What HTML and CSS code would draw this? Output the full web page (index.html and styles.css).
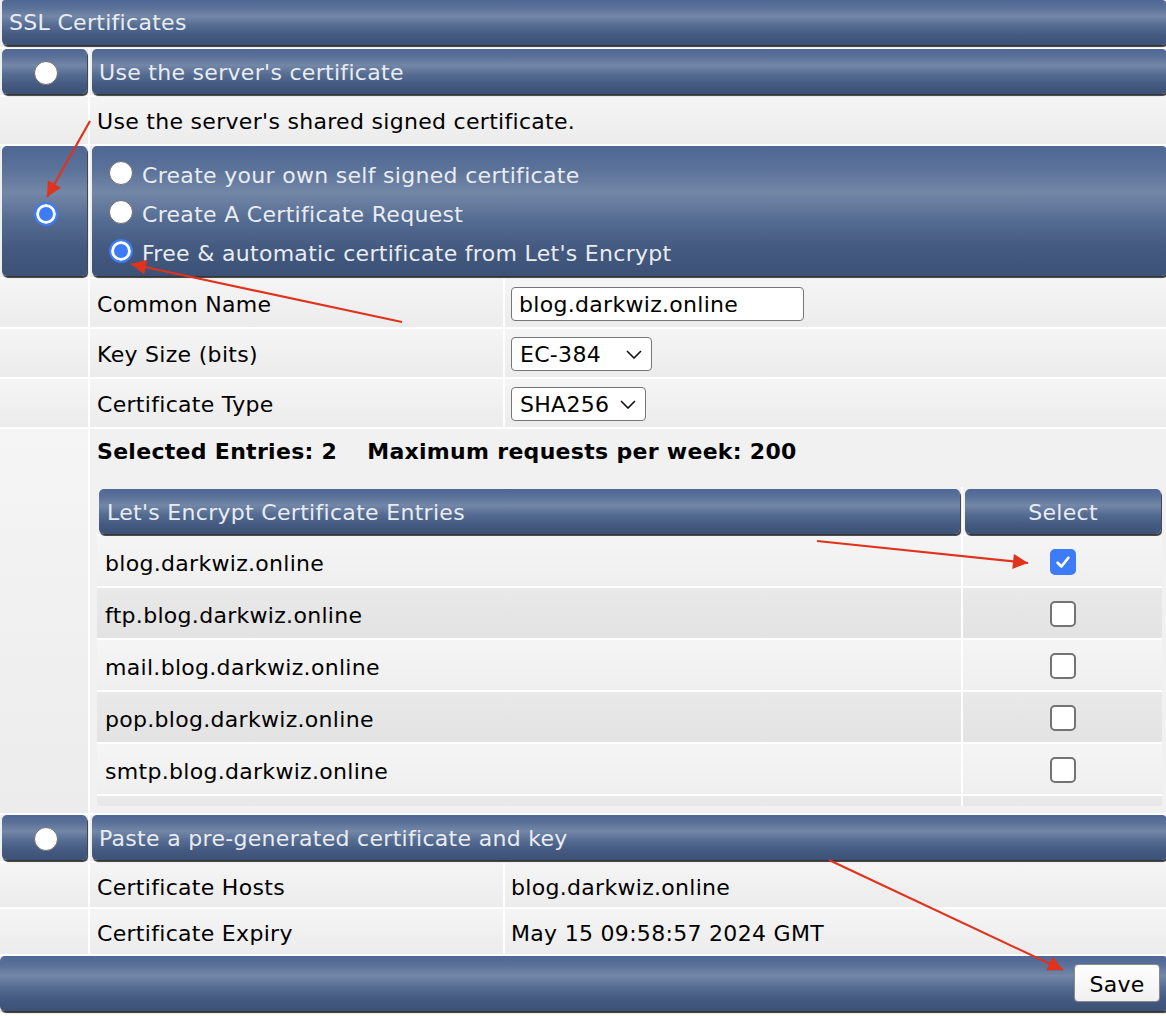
FILE: index.html
```html
<!DOCTYPE html>
<html>
<head>
<meta charset="utf-8">
<title>SSL Certificates</title>
<link rel="stylesheet" href="styles.css">
</head>
<body>
<div class="page">
  <div class="row">
    <div class="dcell span-all title-cell"><div class="bar title-bar">SSL Certificates</div></div>
  </div>

  <div class="row r46">
    <div class="dcell"><div class="bar ctl"><span class="radio"></span></div></div>
    <div class="dcell span-2"><div class="bar text-bar">Use the server's certificate</div></div>
  </div>

  <div class="row h47">
    <div class="lcell"></div>
    <div class="lcell span-2 label">Use the server's shared signed certificate.</div>
  </div>

  <div class="row r130">
    <div class="dcell"><div class="bar ctl"><span class="radio checked"></span></div></div>
    <div class="dcell span-2">
      <div class="bar options">
        <div class="opt"><span class="radio"></span><span>Create your own self signed certificate</span></div>
        <div class="opt"><span class="radio"></span><span>Create A Certificate Request</span></div>
        <div class="opt"><span class="radio checked"></span><span>Free &amp; automatic certificate from Let's Encrypt</span></div>
      </div>
    </div>
  </div>

  <div class="row h48">
    <div class="lcell"></div>
    <div class="lcell label">Common Name</div>
    <div class="lcell value"><div class="input">blog.darkwiz.online</div></div>
  </div>
  <div class="row h48">
    <div class="lcell"></div>
    <div class="lcell label">Key Size (bits)</div>
    <div class="lcell value"><div class="select w141">EC-384<svg class="chev" viewBox="0 0 16 9" width="16" height="9"><path d="M1 1 L8 8 L15 1" fill="none" stroke="#111" stroke-width="1.6"/></svg></div></div>
  </div>
  <div class="row h48">
    <div class="lcell"></div>
    <div class="lcell label">Certificate Type</div>
    <div class="lcell value"><div class="select w135">SHA256<svg class="chev" viewBox="0 0 16 9" width="16" height="9"><path d="M1 1 L8 8 L15 1" fill="none" stroke="#111" stroke-width="1.6"/></svg></div></div>
  </div>

  <div class="row entries-row">
    <div class="lcell"></div>
    <div class="lcell span-2 entries">
      <div class="summary"><span>Selected Entries: 2</span><span class="max">Maximum requests per week: 200</span></div>
      <div class="scroller">
        <div class="etable">
          <div class="ehead"><div class="bar hbar">Let's Encrypt Certificate Entries</div></div>
          <div class="ehead"><div class="bar hbar center">Select</div></div>

          <div class="ecell odd">blog.darkwiz.online</div>
          <div class="ecell odd chk"><span class="checkbox checked"><svg viewBox="0 0 16 16" width="18" height="18"><path d="M3.2 8.6 L6.6 12 L12.8 4.2" fill="none" stroke="#fff" stroke-width="2.4" stroke-linecap="round" stroke-linejoin="round"/></svg></span></div>

          <div class="ecell even">ftp.blog.darkwiz.online</div>
          <div class="ecell even chk"><span class="checkbox"></span></div>

          <div class="ecell odd">mail.blog.darkwiz.online</div>
          <div class="ecell odd chk"><span class="checkbox"></span></div>

          <div class="ecell even">pop.blog.darkwiz.online</div>
          <div class="ecell even chk"><span class="checkbox"></span></div>

          <div class="ecell odd">smtp.blog.darkwiz.online</div>
          <div class="ecell odd chk"><span class="checkbox"></span></div>

          <div class="ecell even"></div>
          <div class="ecell even chk"></div>
        </div>
      </div>
    </div>
  </div>

  <div class="row r46">
    <div class="dcell"><div class="bar ctl"><span class="radio"></span></div></div>
    <div class="dcell span-2"><div class="bar text-bar">Paste a pre-generated certificate and key</div></div>
  </div>

  <div class="row h44">
    <div class="lcell"></div>
    <div class="lcell label">Certificate Hosts</div>
    <div class="lcell value">blog.darkwiz.online</div>
  </div>
  <div class="row h45">
    <div class="lcell"></div>
    <div class="lcell label">Certificate Expiry</div>
    <div class="lcell value">May 15 09:58:57 2024 GMT</div>
  </div>

  <div class="row">
    <div class="span-all footer-cell"><div class="bar footer-bar"><button class="save">Save</button></div></div>
  </div>

  <svg class="arrows" width="1166" height="1016" viewBox="0 0 1166 1016">
    <defs>
      <marker id="ah" viewBox="0 0 10 10" refX="10" refY="5" markerUnits="userSpaceOnUse" markerWidth="18" markerHeight="15" orient="auto">
        <path d="M0 0 L10 5 L0 10 Z" fill="#e0321c"/>
      </marker>
    </defs>
    <line x1="90" y1="121" x2="47" y2="197" stroke="#e0321c" stroke-width="2.2" marker-end="url(#ah)"/>
    <line x1="402" y1="322" x2="131" y2="264" stroke="#e0321c" stroke-width="2.2" marker-end="url(#ah)"/>
    <line x1="817" y1="541" x2="1028" y2="563" stroke="#e0321c" stroke-width="2.2" marker-end="url(#ah)"/>
    <line x1="829" y1="860" x2="1063" y2="970" stroke="#e0321c" stroke-width="2.2" marker-end="url(#ah)"/>
  </svg>
</div>
</body>
</html>
```
FILE: styles.css
```css
html, body {
  margin: 0;
  padding: 0;
  overflow: hidden;
  background: #ffffff;
}
body {
  font-family: "DejaVu Sans", Verdana, sans-serif;
  font-size: 22px;
  letter-spacing: 0.3px;
  color: #000;
}
.page {
  position: relative;
  width: 1168px;
  height: 1016px;
  background: #ffffff;
}
.row {
  display: grid;
  grid-template-columns: 88px 413px 1fr;
  column-gap: 2px;
  margin-bottom: 2px;
}
.span-all { grid-column: 1 / 4; }
.span-2 { grid-column: 2 / 4; }

.bar {
  background: linear-gradient(to bottom, #4e6794 0%, #5b7299 18%, #7387a7 36%, #566d93 56%, #445a80 78%, #3c5176 100%);
  border-radius: 5px;
  box-shadow: 1px 2px 1px rgba(0, 0, 0, 0.78);
  color: #e9ecf1;
  box-sizing: border-box;
}
.dcell {
  background: #efefef;
  padding: 0 1px 0 2px;
}
.title-cell { height: 47px; padding-left: 2px; background: #efefef; }
.title-bar {
  height: 45px;
  display: flex;
  align-items: center;
  padding-left: 7px;
  border-top-left-radius: 3px;
}
.r46 .dcell { height: 46px; }
.r46 .bar { height: 45px; }
.text-bar {
  display: flex;
  align-items: center;
  padding-left: 7px;
  padding-top: 1px;
}
.ctl {
  display: flex;
  align-items: center;
  justify-content: center;
  padding-left: 2px;
  padding-top: 2px;
}
.r130 .dcell { height: 131px; }
.r130 .bar { height: 130px; }
.r130 .ctl { padding-top: 6px; }
.options {
  display: flex;
  flex-direction: column;
  justify-content: center;
  gap: 15px;
  padding-left: 17px;
  padding-top: 7px;
}
.opt {
  display: flex;
  align-items: center;
  gap: 9px;
  height: 24px;
}
.opt .radio { position: relative; top: -3px; }

.radio {
  display: inline-block;
  width: 24px;
  height: 24px;
  box-sizing: border-box;
  border-radius: 50%;
  background: #ffffff;
  border: 1px solid #6e6e6e;
  flex: none;
}
.radio.checked {
  background: #3e7bf6;
  border: 2px solid #3e7bf6;
  box-shadow: inset 0 0 0 3px #ffffff;
}

.lcell {
  background: linear-gradient(to bottom, #f5f5f5, #ececec);
}
.h47 .lcell { height: 47px; }
.h48 .lcell { height: 48px; }
.h44 .lcell { height: 44px; }
.h45 .lcell { height: 45px; }
.label, .value {
  display: flex;
  align-items: center;
  padding-left: 7px;
  padding-top: 2px;
  box-sizing: border-box;
}
.h44 .label, .h44 .value, .h45 .label, .h45 .value { padding-top: 4px; }
.value { padding-left: 6px; }

.input {
  width: 293px;
  height: 34px;
  box-sizing: border-box;
  border: 1px solid #777;
  border-radius: 4px;
  background: #fff;
  display: flex;
  align-items: center;
  padding-left: 7px;
}
.select {
  height: 34px;
  box-sizing: border-box;
  border: 1px solid #777;
  border-radius: 4px;
  background: #fff;
  display: flex;
  align-items: center;
  justify-content: space-between;
  padding: 0 9px 0 8px;
}
.w141 { width: 141px; }
.w135 { width: 135px; }
.chev { flex: none; }

.entries-row .lcell { height: 384px; }
.entries {
  padding: 11px 6px 0 7px;
  box-sizing: border-box;
  background: #f1f1f1;
}
.summary {
  font-weight: bold;
  height: 24px;
  line-height: 24px;
  white-space: nowrap;
}
.summary .max { margin-left: 30px; }
.scroller {
  margin-top: 23px;
  height: 319px;
  overflow: hidden;
  background: #f1f1f1;
}
.etable {
  display: grid;
  grid-template-columns: 864px 1fr;
  gap: 2px;
  background: #ffffff;
}
.ehead {
  background: #f1f1f1;
  height: 47px;
  padding: 2px 1px 0 2px;
  box-sizing: border-box;
}
.hbar {
  height: 45px;
  display: flex;
  align-items: center;
  padding-left: 8px;
  padding-top: 2px;
}
.hbar.center { justify-content: center; padding-left: 0; }
.ecell {
  height: 50px;
  display: flex;
  align-items: center;
  padding-left: 8px;
  padding-top: 4px;
  box-sizing: border-box;
}
.ecell.odd { background: linear-gradient(to bottom, #f5f5f5, #efefef); }
.ecell.even { background: linear-gradient(to bottom, #e9e9e9, #e3e3e3); }
.ecell.chk { justify-content: center; padding-left: 0; padding-top: 2px; }
.checkbox {
  width: 26px;
  height: 26px;
  box-sizing: border-box;
  border: 2px solid #737373;
  border-radius: 5px;
  background: #fff;
  display: flex;
  align-items: center;
  justify-content: center;
}
.checkbox.checked {
  background: #3e7bf6;
  border-color: #3e7bf6;
}

.footer-cell { background: #efefef; height: 57px; }
.footer-bar {
  height: 55px;
  display: flex;
  align-items: flex-start;
  justify-content: flex-end;
  padding: 8px 8px 0 0;
}
.save {
  font-family: "DejaVu Sans", Verdana, sans-serif;
  font-size: 22px;
  letter-spacing: 0.3px;
  width: 86px;
  height: 38px;
  border: 1px solid #8a8a8a;
  border-radius: 4px;
  background: linear-gradient(to bottom, #ffffff, #f0f0f0);
  color: #000;
  padding: 3px 0 0 0;
}

.arrows {
  position: absolute;
  left: 0;
  top: 0;
  pointer-events: none;
}
```
